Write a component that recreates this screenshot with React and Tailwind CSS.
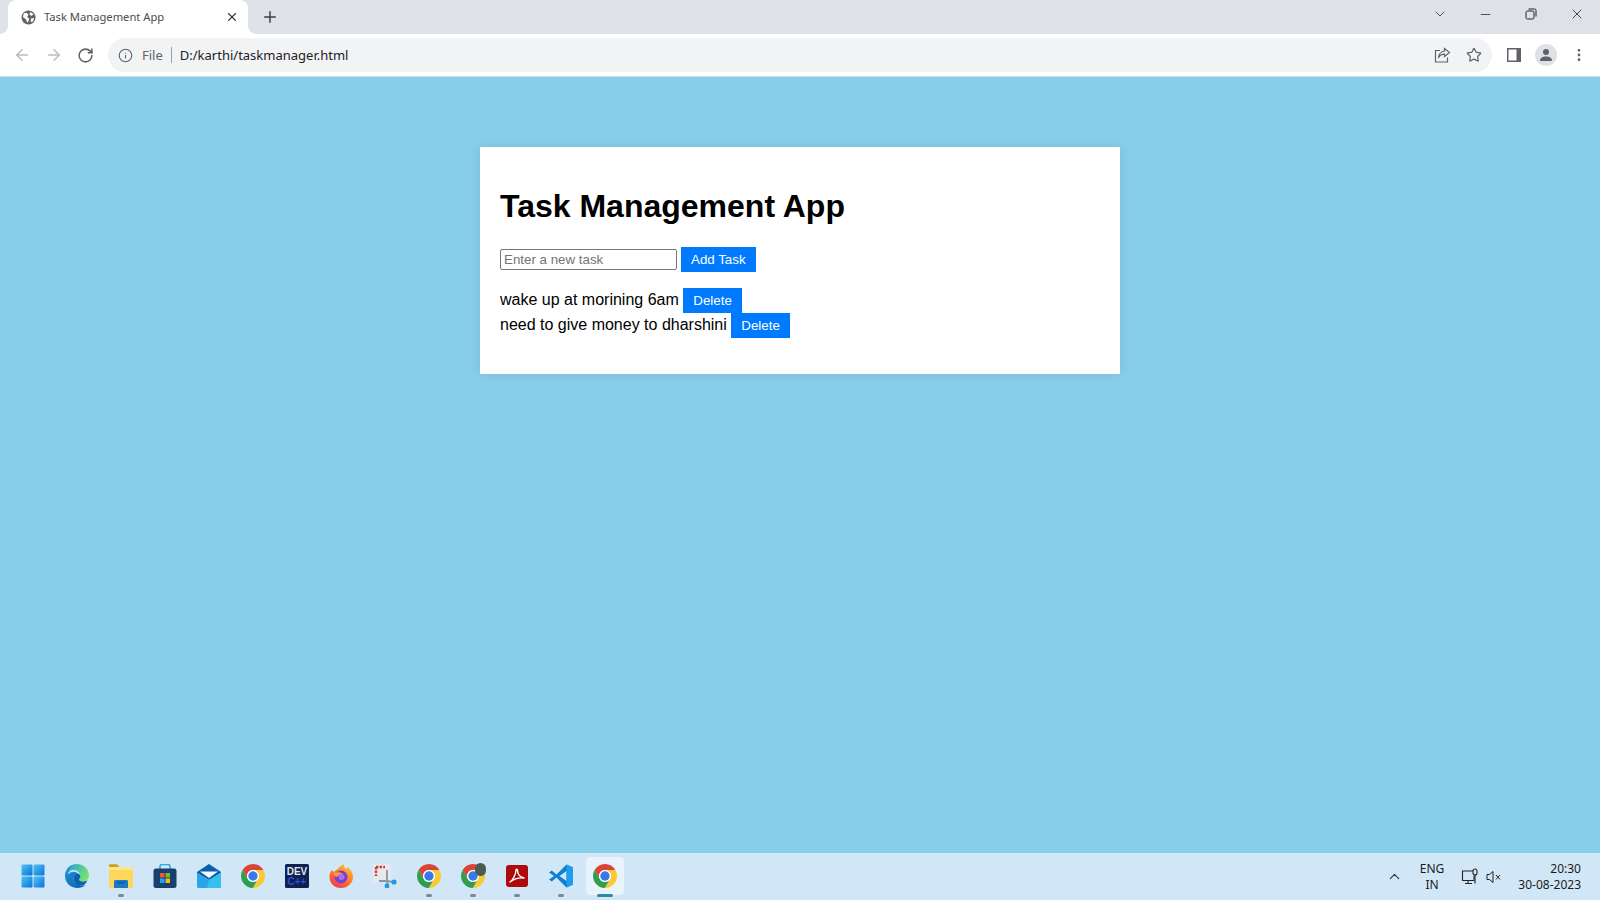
import React from 'react'
import { ArrowLeft, ArrowRight, RotateCw, Info, Star, X, Plus, ChevronDown, ChevronUp, Minus, EllipsisVertical } from 'lucide-react'

function Chrome({ size = 24 }) {
  return (
    <svg width={size} height={size} viewBox="0 0 24 24">
      <path d="M22.39 6A12 12 0 0 0 1.61 6L6.8 15A6 6 0 0 1 12 6Z" fill="#db4437" />
      <path d="M1.61 6A12 12 0 0 0 12 24L17.2 15A6 6 0 0 1 6.8 15Z" fill="#2f9e4f" />
      <path d="M12 24A12 12 0 0 0 22.39 6H12A6 6 0 0 1 17.2 15Z" fill="#fcc934" />
      <circle cx="12" cy="12" r="6" fill="#fff" />
      <circle cx="12" cy="12" r="4.7" fill="#3b78e7" />
    </svg>
  )
}

function WindowsLogo() {
  return (
    <svg width="24" height="24" viewBox="0 0 24 24">
      <defs>
        <linearGradient id="win" x1="0" y1="0" x2="1" y2="1">
          <stop offset="0" stopColor="#4fc3f7" />
          <stop offset="1" stopColor="#0a74d6" />
        </linearGradient>
      </defs>
      <rect x="0.5" y="0.5" width="11" height="11" rx="1" fill="url(#win)" />
      <rect x="12.5" y="0.5" width="11" height="11" rx="1" fill="url(#win)" />
      <rect x="0.5" y="12.5" width="11" height="11" rx="1" fill="url(#win)" />
      <rect x="12.5" y="12.5" width="11" height="11" rx="1" fill="url(#win)" />
    </svg>
  )
}

function Edge() {
  return (
    <svg width="24" height="24" viewBox="0 0 24 24">
      <defs>
        <linearGradient id="edge1" x1="0" y1="0" x2="1" y2="1">
          <stop offset="0" stopColor="#1b9de2" />
          <stop offset="1" stopColor="#0c59a4" />
        </linearGradient>
        <linearGradient id="edge2" x1="0" y1="0" x2="1" y2="0.6">
          <stop offset="0" stopColor="#1fa8dc" />
          <stop offset="1" stopColor="#7be36b" />
        </linearGradient>
      </defs>
      <path d="M12 0C5 0 0 5.500 0 12C0 19 5.500 24 12.500 24C15.500 24 18.500 23 20.500 21C19 21.500 18 21.500 17 21.500C12.500 21.500 8.500 18.500 8.500 14.500C8.500 11.500 10.500 9.500 13 9.500C10 6.500 5 7.500 3 10.500C4 5 8 0 12 0Z" fill="url(#edge1)" />
      <path d="M12 0C18.500 0 24 5 24 11.500C24 15 21 17.500 17.500 17.500C15 17.500 13.500 16.500 14 15.500C15 14.500 15.500 13.500 15.500 12.500C15.500 9 12.500 6 8.500 6C6 6 4 7.500 3 10C4 4 8 0 12 0Z" fill="url(#edge2)" />
      <path d="M8.500 14C8.500 11.500 10.500 9.500 13 9.500C14.500 10 15.500 11.500 15.500 12.500C15.500 13.500 14.500 14.500 14 15.500C14 17 16 17.500 17.500 17.500C19.500 17.500 21.500 17 22.500 16C21.500 19.500 19 21.500 16.500 21.500C12 21.500 8.500 18.500 8.500 14Z" fill="#0d5fae" />
    </svg>
  )
}

function Folder() {
  return (
    <svg width="24" height="24" viewBox="0 0 24 24">
      <path d="M0 1.500C0 0.700 0.500 0.200 1.200 0.200H8L10.500 3H0Z" fill="#d49c12" />
      <rect x="0" y="3" width="24" height="21" rx="1" fill="#fbd75b" />
      <rect x="0" y="3" width="24" height="3" fill="#fde68a" />
      <path d="M5 24V17.500C5 16.500 5.700 16 6.500 16H17.500C18.300 16 19 16.500 19 17.500V24Z" fill="#1a78c9" />
      <rect x="8" y="18" width="8" height="1.500" rx="0.700" fill="#0f5aa0" />
    </svg>
  )
}

function Store() {
  return (
    <svg width="24" height="24" viewBox="0 0 24 24">
      <path d="M7 5V2.500C7 1.200 8 0.500 9 0.500H15C16 0.500 17 1.200 17 2.500V5" fill="none" stroke="#2aa6e0" strokeWidth="1.500" />
      <rect x="0.500" y="4.500" width="23" height="19.500" rx="2.500" fill="#17406f" />
      <rect x="7" y="9" width="4.500" height="4.500" fill="#f0562c" />
      <rect x="12.500" y="9" width="4.500" height="4.500" fill="#7cb82f" />
      <rect x="7" y="14.500" width="4.500" height="4.500" fill="#1ea5ef" />
      <rect x="12.500" y="14.500" width="4.500" height="4.500" fill="#fcb813" />
    </svg>
  )
}

function Mail() {
  return (
    <svg width="24" height="24" viewBox="0 0 24 24">
      <path d="M0 8L12 0L24 8V9L12 16L0 9Z" fill="#0b5fa8" />
      <path d="M3 7.500H21L12 14Z" fill="#f4f8fc" />
      <path d="M0 8.500L12 16L24 8.500V22.500C24 23.300 23.300 24 22.500 24H1.500C0.700 24 0 23.300 0 22.500Z" fill="#2aa5e5" />
      <path d="M12 16L24 8.500V22.500C24 23.300 23.300 24 22.500 24H10Z" fill="#36c0f0" />
    </svg>
  )
}

function DevCpp() {
  return (
    <svg width="24" height="24" viewBox="0 0 24 24">
      <rect width="24" height="24" rx="1.500" fill="#10214f" />
      <text x="12" y="10.500" textAnchor="middle" fontSize="10" fontWeight="700" fill="#dfe6f2" fontFamily="Liberation Sans, sans-serif">DEV</text>
      <text x="12" y="21" textAnchor="middle" fontSize="10" fontWeight="700" fill="#2c50d8" fontFamily="Liberation Sans, sans-serif">C++</text>
    </svg>
  )
}

function Firefox() {
  return (
    <svg width="24" height="24" viewBox="0 0 24 24">
      <defs>
        <linearGradient id="fx" x1="0.8" y1="0" x2="0.200" y2="1">
          <stop offset="0" stopColor="#ffc82e" />
          <stop offset="0.500" stopColor="#ff7a2b" />
          <stop offset="1" stopColor="#f0325a" />
        </linearGradient>
      </defs>
      <path d="M12 24C5 24 0.500 19 0.500 13C0.500 10 1.500 7.500 3 6C3.500 7 4 7.500 5 8C6 6.500 8 5 9 5C10 3 12 1.500 15 0C14.500 2 15.500 4 17 5C18 4.500 18.500 3.500 18.500 3C22 5.500 24 9 24 13C24 19 19 24 12 24Z" fill="url(#fx)" />
      <circle cx="12" cy="13" r="6.500" fill="#7b3fc9" />
      <circle cx="12.500" cy="13" r="3" fill="#a66ff0" />
      <path d="M4 9C8 7.500 12 8 14 10C11 9.500 9 11 8 13C6 12.500 5 11 4 9Z" fill="#ff9a2b" />
    </svg>
  )
}

function Snip() {
  return (
    <svg width="24" height="24" viewBox="0 0 24 24">
      <rect x="0" y="0" width="18" height="18" rx="2" fill="#e6eaee" />
      <path d="M3 3H12M3 3V12" stroke="#d13a2a" strokeWidth="2.400" strokeDasharray="2.400 1.200" fill="none" />
      <path d="M14 6V17H6M14 17L15 23M14 17L20 18" stroke="#8b95a1" strokeWidth="1.800" fill="none" />
      <circle cx="21" cy="18" r="2.600" fill="#1e9be0" />
      <circle cx="14" cy="22" r="2.400" fill="#1e9be0" />
    </svg>
  )
}

function Acrobat() {
  return (
    <svg width="24" height="24" viewBox="0 0 24 24">
      <rect x="1" y="1" width="22" height="22" rx="3" fill="#ad0b0b" />
      <path d="M5 18C8 16 11 10 11 6C11 5 12.500 5 12.500 6.500C12.500 10 15 13.500 19 14C15 13.500 9 15 5 18Z" fill="none" stroke="#fff" strokeWidth="1.400" strokeLinejoin="round" />
    </svg>
  )
}

function VsCode() {
  return (
    <svg width="24" height="24" viewBox="0 0 24 24">
      <path d="M17.500 0.500L24 3.500V20.500L17.500 23.500L7.500 13.500L2.800 17.500L0 15.500L5 12L0 8.500L2.800 6.500L7.500 10.500Z" fill="#0f7fd0" />
      <path d="M17.500 7L10.500 12L17.500 17Z" fill="#d1e6f6" />
      <path d="M17.500 0.500L24 3.500V20.500L17.500 23.500Z" fill="#1f9cf0" />
    </svg>
  )
}

function TaskIcon({ children, open, active }) {
  return (
    <div className="relative flex h-[47px] w-[44px] items-center justify-center pb-[2px]">
      {active && <div className="absolute top-[4px] left-[3px] h-[38px] w-[38px] rounded-[4px] bg-white/50"></div>}
      <div className="relative flex h-[24px] w-[24px] items-center justify-center">{children}</div>
      {open && <div className={active ? 'absolute bottom-[3px] h-[3px] w-[16px] rounded-full bg-[#2b8aa6]' : 'absolute bottom-[3px] h-[3px] w-[6px] rounded-full bg-[#7d8a96]'}></div>}
    </div>
  )
}

function Taskbar() {
  return (
    <div className="flex h-[47px] shrink-0 items-center bg-[#d1e6f6] pl-[11px] pr-[19px] font-['Noto_Sans',sans-serif] text-[#1c1c1c]">
      <TaskIcon><WindowsLogo /></TaskIcon>
      <TaskIcon><Edge /></TaskIcon>
      <TaskIcon open><Folder /></TaskIcon>
      <TaskIcon><Store /></TaskIcon>
      <TaskIcon><Mail /></TaskIcon>
      <TaskIcon><Chrome /></TaskIcon>
      <TaskIcon><DevCpp /></TaskIcon>
      <TaskIcon><Firefox /></TaskIcon>
      <TaskIcon><Snip /></TaskIcon>
      <TaskIcon open><Chrome /></TaskIcon>
      <TaskIcon open>
        <Chrome />
        <div className="absolute -right-[1px] -top-[1px] h-[13px] w-[11px] rounded-full bg-[#4b5a52]"></div>
      </TaskIcon>
      <TaskIcon open><Acrobat /></TaskIcon>
      <TaskIcon open><VsCode /></TaskIcon>
      <TaskIcon open active><Chrome /></TaskIcon>

      <div className="ml-auto flex items-center">
        <ChevronUp size={17} strokeWidth={1.6} className="mr-[17px] text-[#333]" />
        <div className="mr-[17px] flex flex-col items-center text-[12px] leading-[16px]">
          <span>ENG</span>
          <span>IN</span>
        </div>
        <svg width="18" height="18" viewBox="0 0 18 18" fill="none" stroke="#222" strokeWidth="1.100" className="mr-[6px]">
          <path d="M12 3H1.500V12.500H13V8" />
          <path d="M7 12.500V15M4 15.500H11" />
          <rect x="12" y="1" width="4" height="6" rx="2" />
          <path d="M14 7V15.500" />
        </svg>
        <svg width="18" height="18" viewBox="0 0 18 18" fill="none" stroke="#222" strokeWidth="1" className="mr-[15px]">
          <path d="M2 6.500H4.500L8 3.500V14.500L4.500 11.500H2Z" />
          <path d="M11 7L15 11.500M15 7L11 11.500" />
        </svg>
        <div className="flex flex-col items-end text-[12px] leading-[16px]">
          <span>20:30</span>
          <span>30-08-2023</span>
        </div>
      </div>
    </div>
  )
}

function TabStrip() {
  return (
    <div className="flex h-[34px] shrink-0 items-center bg-[#dee1e6] pl-[8px] pr-[15px] text-[#45494d]">
      <div className="relative flex h-[34px] w-[240px] items-center rounded-t-[8px] bg-white pl-[13px] pr-[9px]">
        <div className="absolute bottom-0 -left-[8px] h-[8px] w-[8px] bg-[radial-gradient(circle_at_0_0,transparent_7.5px,white_8px)]"></div>
        <div className="absolute bottom-0 -right-[8px] h-[8px] w-[8px] bg-[radial-gradient(circle_at_100%_0,transparent_7.5px,white_8px)]"></div>
        <svg width="15" height="15" viewBox="0 0 16 16" className="shrink-0">
          <circle cx="8" cy="8" r="7.500" fill="#5f6368" />
          <path d="M3 3.500L6 3L8 5L6.500 7.500L8.500 9V11L6.500 13.500L5.500 10L2 7.500ZM10 2L13.500 4.500L11 6.500L9 4.500ZM10.500 9L14 8.500L13 12L10.500 13Z" fill="#fff" />
        </svg>
        <span className="ml-[8px] font-['Noto_Sans',sans-serif] text-[11.2px] text-[#4a4d51]">Task Management App</span>
        <X size={14} strokeWidth={2} className="ml-auto text-[#3c4043]" />
      </div>
      <Plus size={18} strokeWidth={2} className="ml-[13px] text-[#3c4043]" />
      <ChevronDown size={16} strokeWidth={1.3} className="mb-[6px] ml-auto mr-[30px] text-[#3c4043]" />
      <Minus size={15} strokeWidth={1.2} className="mb-[6px] mr-[32px] text-[#222]" />
      <svg width="12" height="12" viewBox="0 0 12 12" fill="none" stroke="#222" strokeWidth="1" className="mb-[6px] mr-[32px]">
        <rect x="1" y="3" width="8" height="8" rx="1.500" />
        <path d="M3.500 1H9.500C10.500 1 11 1.500 11 2.500V8.500" />
      </svg>
      <X size={16} strokeWidth={1.2} className="mb-[6px] text-[#222]" />
    </div>
  )
}

function Toolbar() {
  return (
    <div className="flex h-[42px] shrink-0 items-center bg-white pl-[13px] pr-[13px] text-[#5f6368]">
      <ArrowLeft size={18} strokeWidth={2} className="text-[#babcbe]" />
      <ArrowRight size={18} strokeWidth={2} className="ml-[14px] text-[#babcbe]" />
      <RotateCw size={17} strokeWidth={2.2} className="ml-[14px]" />
      <div className="ml-[14px] flex h-[34px] flex-1 items-center rounded-full bg-[#f1f3f4] pl-[10px] pr-[10px] font-['Noto_Sans',sans-serif]">
        <Info size={15} strokeWidth={1.8} />
        <span className="ml-[9px] pt-[1px] text-[13px] text-[#5f6368]">File</span>
        <div className="mx-[8px] h-[16px] w-[1px] bg-[#9aa0a6]"></div>
        <span className="pt-[1px] text-[13px] text-[#202124]">D:/karthi/taskmanager.html</span>
        <svg width="17" height="17" viewBox="0 0 17 17" fill="none" stroke="#5f6368" strokeWidth="1.200" className="ml-auto">
          <path d="M6 3.500H1.500V15H13.500V10.500" />
          <path d="M10.500 1.500L15.500 5.500L10.500 9.500V7.200C7.500 7.200 5.500 8.500 4.500 11C4.500 7.500 7 4.500 10.500 4Z" />
        </svg>
        <Star size={16} strokeWidth={1.8} className="ml-[15px]" />
      </div>
      <svg width="14" height="14" viewBox="0 0 14 14" className="ml-[15px]">
        <rect width="14" height="14" fill="#5f6368" />
        <rect x="1.500" y="1.500" width="8" height="11" fill="#fff" />
      </svg>
      <div className="ml-[14px] flex h-[22px] w-[22px] items-center justify-center rounded-full bg-[#dee1e6]">
        <svg width="14" height="14" viewBox="0 0 14 14" fill="#5f6368">
          <circle cx="7" cy="4" r="3" />
          <path d="M1 13C1 9.500 4 8.500 7 8.500C10 8.500 13 9.500 13 13Z" />
        </svg>
      </div>
      <EllipsisVertical size={16} strokeWidth={2.2} className="ml-[14px]" />
    </div>
  )
}

function Task({ text }) {
  return (
    <li className="flex h-[25px] items-center">
      <span className="pb-[2px] text-[16px]">{text}</span>
      <button className="ml-[4px] h-[25px] bg-[#007bff] px-[10.5px] text-[13.33px] text-white">Delete</button>
    </li>
  )
}

export default function App() {
  return (
    <div className="flex h-screen flex-col overflow-hidden font-['Liberation_Sans',sans-serif]">
      <TabStrip />
      <Toolbar />
      <div className="flex-1 border-t border-[#c8dfe9] bg-[#87ceeb] pt-[70px]">
        <div className="mx-auto h-[227px] w-[640px] bg-white p-[20px] text-black shadow-[0_0_10px_rgba(0,0,0,0.1)]">
          <h1 className="mt-[21px] text-[32px] leading-[37px] font-bold">Task Management App</h1>
          <div className="mt-[22px] flex items-center">
            <input
              placeholder="Enter a new task"
              className="h-[21px] w-[177px] rounded-[2px] border border-[#767676] px-[3px] text-[13.33px] placeholder:text-[#757575]"
            />
            <button className="ml-[4px] h-[25px] bg-[#007bff] px-[10px] text-[13.33px] text-white">Add Task</button>
          </div>
          <ul className="mt-[16px]">
            <Task text="wake up at morining 6am" />
            <Task text="need to give money to dharshini" />
          </ul>
        </div>
      </div>
      <Taskbar />
    </div>
  )
}
